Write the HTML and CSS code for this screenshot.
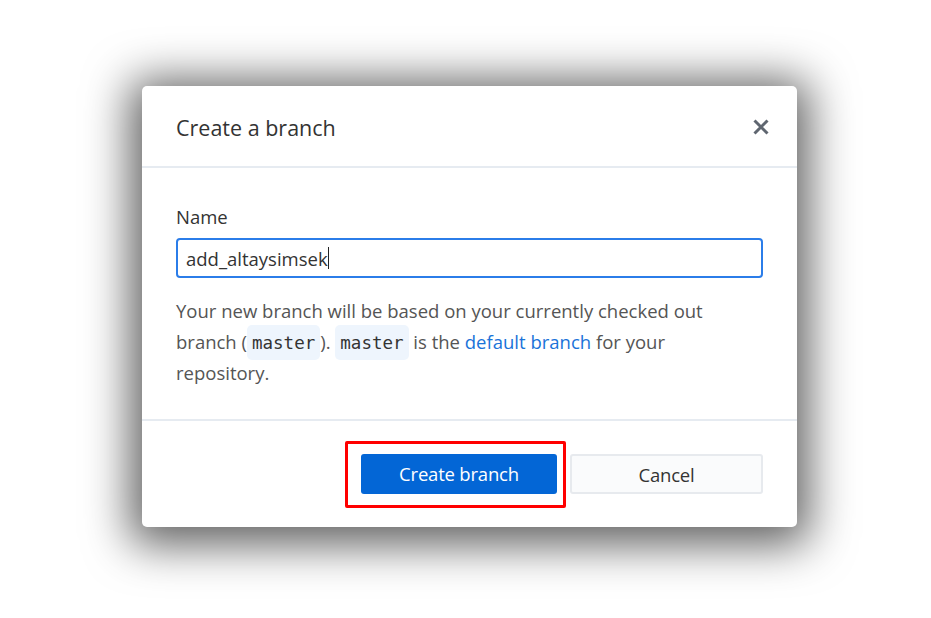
FILE: index.html
```html
<!DOCTYPE html>
<html>
<head>
<meta charset="utf-8">
<link rel="stylesheet" href="styles.css">
</head>
<body>
<div class="stage">
  <div class="dialog">
    <div class="header">
      <h1 class="title">Create a branch</h1>
      <button class="close" aria-label="Close">
        <svg width="18" height="18" viewBox="0 0 18 18"><path d="M2.5 2.5 L15.5 15.5 M15.5 2.5 L2.5 15.5" stroke="#5f6670" stroke-width="3" stroke-linecap="butt"/></svg>
      </button>
    </div>
    <div class="body">
      <label class="label">Name</label>
      <div class="input">add_altaysimsek<span class="caret"></span></div>
      <p class="desc">Your new branch will be based on your currently checked out branch (<code>master</code>). <code>master</code> is the <a class="link">default branch</a> for your repository.</p>
    </div>
    <div class="footer">
      <div class="highlight"><button class="btn primary">Create branch</button></div>
      <button class="btn secondary">Cancel</button>
    </div>
  </div>
</div>
</body>
</html>
```
FILE: styles.css
```css
html, body { margin: 0; padding: 0; background: #fff; }
body { font-family: "Open Sans", "Noto Sans", sans-serif; color: #24292e; min-height: 100vh; }
.stage { padding: 86px 0 0 142px; min-height: 618px; box-sizing: border-box; }
.dialog {
  width: 655px;
  height: 441px;
  background: #fff;
  border-radius: 5px;
  box-shadow: 0 6px 45px 12px rgba(0,0,0,0.62);
  display: flex;
  flex-direction: column;
}
.header {
  height: 82px;
  flex: none;
  border-bottom: 2px solid #e6ebf1;
  display: flex;
  align-items: center;
  justify-content: space-between;
  padding: 4px 25px 0 34px;
  box-sizing: border-box;
}
.title { margin: 0; font-size: 21.5px; font-weight: 400; color: #333; letter-spacing: 0; line-height: 28px; }
.close { border: 0; background: none; padding: 0; width: 22px; height: 22px; display: flex; align-items: center; justify-content: center; margin-top: -2px; }
.body { padding: 37px 34px 0 34px; height: 253px; flex: none; box-sizing: border-box; border-bottom: 2px solid #e6ebf1; }
.label { display: block; font-size: 18.5px; color: #333; line-height: 24px; }
.input {
  margin-top: 9px;
  height: 40px;
  box-sizing: border-box;
  border: 2px solid #2b7de9;
  border-radius: 4px;
  padding: 0 8px;
  display: flex;
  align-items: center;
  font-size: 18.5px;
  color: #333;
}
.caret { display: inline-block; width: 1px; height: 22px; background: #222; }
.desc { margin: 17px 0 0; font-size: 18.5px; line-height: 31px; color: #555; width: 570px; }
code {
  font-family: "DejaVu Sans Mono", "Liberation Mono", monospace;
  font-size: 17.5px;
  line-height: 1;
  background: #eef5fd;
  border-radius: 5px;
  padding: 8px 5px 7px;
  color: #333;
}
.link { color: #1a73d9; }
.footer { flex: 1; display: flex; align-items: center; justify-content: flex-end; padding: 0 34px 0 0; }
.highlight { border: 3px solid #f00; border-radius: 2px; padding: 10px 6px 11px 13px; margin-right: 4px; }
.btn { font-family: inherit; font-size: 18.5px; height: 40px; border-radius: 3px; cursor: pointer; letter-spacing: -0.2px; }
.primary { width: 196px; background: #0366d6; color: #fff; border: 0; display: block; }
.secondary { width: 193px; background: #fafbfc; border: 2px solid #e7eaee; color: #333; }
```
